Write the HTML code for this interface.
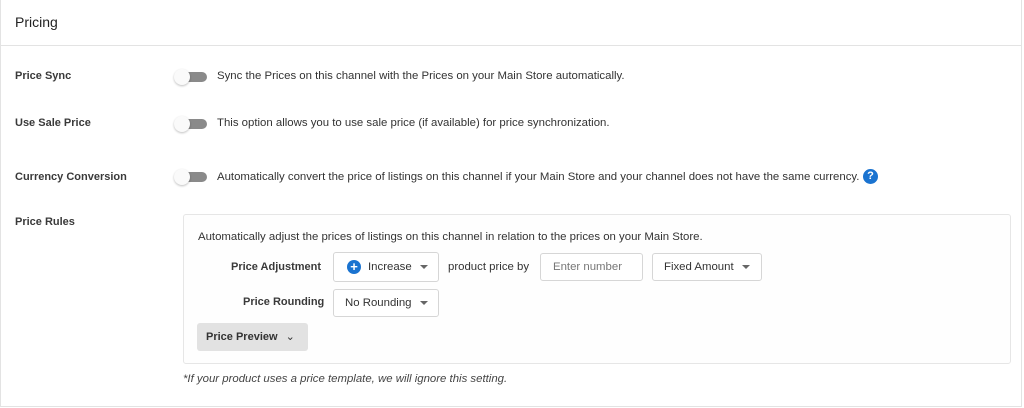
<!DOCTYPE html>
<html><head><style>
*{box-sizing:border-box;margin:0;padding:0}
body{width:1024px;height:408px;background:#fff;font-family:"Liberation Sans",sans-serif;color:#333;position:relative;overflow:hidden}
.frame{position:absolute;left:0;top:0;width:1022px;height:407px;border:1px solid #e3e3e3;border-top:none}
.a{position:absolute;white-space:nowrap}
.h{left:15px;top:14px;font-size:14px;color:#222}
.hl{position:absolute;left:0;top:45px;width:1022px;height:1px;background:#e3e3e3}
.lbl{left:15px;font-size:11px;font-weight:bold;color:#3a3a3a}
.desc{left:217px;font-size:11.4px;color:#333}
.tg{position:absolute;left:174px;width:33px;height:16px}
.tg .tr{position:absolute;left:6px;top:3px;width:27px;height:10px;border-radius:5px;background:#8a8a8a}
.tg .kn{position:absolute;left:0;top:0;width:16px;height:16px;border-radius:50%;background:#fafafa;box-shadow:0 1px 2px rgba(0,0,0,.25)}
.box{position:absolute;left:183px;top:214px;width:828px;height:150px;border:1px solid #e6e6e6;border-radius:3px;background:#fefefe}
.in{position:absolute;border:1px solid #d6d6d6;border-radius:3px;background:#fff;font-size:11.4px;color:#333;display:flex;align-items:center;padding-left:11px}
.car{display:inline-block;width:0;height:0;border-left:4px solid transparent;border-right:4px solid transparent;border-top:4px solid #666;margin-left:8px}
.rl{font-size:11px;font-weight:bold;color:#3a3a3a}
</style></head><body>
<div class="frame"></div>
<div class="a h">Pricing</div>
<div class="hl"></div>

<div class="a lbl" style="top:70px">Price Sync</div>
<div class="tg" style="top:69px"><div class="tr"></div><div class="kn"></div></div>
<div class="a desc" style="top:70px">Sync the Prices on this channel with the Prices on your Main Store automatically.</div>

<div class="a lbl" style="top:117px">Use Sale Price</div>
<div class="tg" style="top:116px"><div class="tr"></div><div class="kn"></div></div>
<div class="a desc" style="top:117px">This option allows you to use sale price (if available) for price synchronization.</div>

<div class="a lbl" style="top:171px">Currency Conversion</div>
<div class="tg" style="top:169px"><div class="tr"></div><div class="kn"></div></div>
<div class="a desc" style="top:171px">Automatically convert the price of listings on this channel if your Main Store and your channel does not have the same currency.</div>
<div class="a" style="left:863px;top:169px;width:15px;height:15px;border-radius:50%;background:#1a73d0;color:#fff;font-size:11px;font-weight:bold;text-align:center;line-height:15px">?</div>

<div class="a lbl" style="top:216px">Price Rules</div>
<div class="box"></div>
<div class="a" style="left:198px;top:231px;font-size:11.4px;color:#333">Automatically adjust the prices of listings on this channel in relation to the prices on your Main Store.</div>

<div class="a rl" style="left:231px;top:261px">Price Adjustment</div>
<div class="in" style="left:333px;top:252px;width:106px;height:30px;padding-left:13px">
<span style="display:inline-block;width:14px;height:14px;border-radius:50%;background:#1a73d0;color:#fff;font-weight:bold;font-size:13px;line-height:14px;text-align:center;margin-right:7px">+</span>Increase<span class="car"></span></div>
<div class="a" style="left:448px;top:261px;font-size:11.4px">product price by</div>
<div class="in" style="left:540px;top:253px;width:103px;height:28px;color:#777;padding-left:12px">Enter number</div>
<div class="in" style="left:652px;top:253px;width:110px;height:28px">Fixed Amount<span class="car"></span></div>

<div class="a rl" style="left:243px;top:296px">Price Rounding</div>
<div class="in" style="left:333px;top:289px;width:106px;height:28px;padding-left:11px">No Rounding<span class="car"></span></div>

<div class="a" style="left:197px;top:323px;width:111px;height:28px;background:#e2e2e2;border-radius:3px;font-size:11px;font-weight:bold;color:#333;line-height:28px;padding-left:9px">Price Preview <span style="font-weight:normal;margin-left:5px">&#8964;</span></div>

<div class="a" style="left:183px;top:373px;font-size:11.4px;font-style:italic;color:#444">*If your product uses a price template, we will ignore this setting.</div>
</body></html>
